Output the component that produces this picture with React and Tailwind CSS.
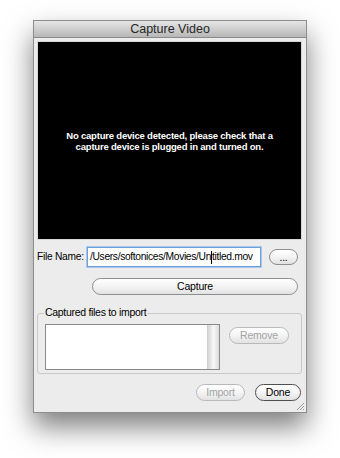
import React from 'react';

function AquaButton({ children, className = '', disabled = false, primary = false }) {
    const border = disabled ? 'border-[#b9b9b9] text-[#a3a3a3]' : primary ? 'border-[#4f4f4f] text-black' : 'border-[#8e8e8e] text-black';
    return (
        <div className={`flex items-center justify-center rounded-full border bg-gradient-to-b from-white via-[#f4f4f4] to-[#e2e2e2] text-[10.5px] tracking-[-0.2px] leading-none ${border} ${className}`}>
            {children}
        </div>
    );
}

export default function App() {
    return (
        <div className="w-[340px] h-[458px] bg-white pt-[20px] pl-[33px] font-['Liberation_Sans',Arial,sans-serif]">
            <div className="w-[274px] h-[393px] border border-[#8d8d8d] bg-[#ececec] shadow-[0_14px_26px_rgba(0,0,0,0.5)] flex flex-col relative">
                {/* Title bar */}
                <div className="h-[17px] shrink-0 bg-gradient-to-b from-[#e6e6e6] to-[#b7b7b7] border-b border-[#8a8a8a] flex items-center justify-center">
                    <span className="text-[12.5px] text-[#262626] leading-none">Capture Video</span>
                </div>

                <div className="pl-[3px] pt-[3px] flex flex-col">
                    {/* Preview */}
                    <div className="w-[265px] h-[199px] bg-black border border-[#d6d6d6] flex items-center justify-center">
                        <p className="text-white font-bold text-[9.5px] leading-[11px] text-center tracking-[-0.2px]">
                            No capture device detected, please check that a<br />
                            capture device is plugged in and turned on.
                        </p>
                    </div>

                    {/* File row */}
                    <div className="mt-[7px] flex items-center h-[20px]">
                        <span className="w-[50px] shrink-0 whitespace-nowrap text-[10.2px] tracking-[-0.25px] text-black">File Name:</span>
                        <div className="w-[174px] h-[20px] shrink-0 bg-white border border-[#6f9fd8] shadow-[0_0_0_1px_#a9c8ee] flex items-center pl-[2px] text-[10.3px] tracking-[-0.35px] text-black whitespace-nowrap overflow-hidden">
                            /Users/softonices/Movies/Un<span className="inline-block w-px h-[13px] bg-black"></span>titled.mov
                        </div>
                        <AquaButton className="ml-[8px] w-[29px] h-[16px] shrink-0 text-[9px]">...</AquaButton>
                    </div>

                    {/* Capture */}
                    <AquaButton className="mt-[11px] ml-[55px] w-[206px] h-[17px]">Capture</AquaButton>

                    {/* Group box */}
                    <div className="mt-[18px] w-[265px] h-[61px] border border-[#c9c9c9] rounded-[3px] relative flex">
                        <span className="absolute -top-[7px] left-[6px] bg-[#ececec] px-[1px] text-[10.5px] tracking-[-0.3px] text-black leading-none whitespace-nowrap">Captured files to import</span>
                        <div className="mt-[10px] ml-[7px] w-[175px] h-[46px] bg-white border border-[#8a8a8a] flex justify-end">
                            <div className="w-[12px] h-full bg-gradient-to-r from-[#d5d5d5] via-[#f7f7f7] to-[#dcdcdc] border-l border-[#cfcfcf]"></div>
                        </div>
                        <AquaButton disabled className="mt-[13px] ml-[9px] w-[60px] h-[17px]">Remove</AquaButton>
                    </div>

                    {/* Bottom buttons */}
                    <div className="mt-[10px] flex justify-end gap-[10px] pr-[5px]">
                        <AquaButton disabled className="w-[49px] h-[17px]">Import</AquaButton>
                        <AquaButton primary className="w-[46px] h-[17px]">Done</AquaButton>
                    </div>
                </div>

                {/* Resize grip */}
                <svg className="absolute right-[1px] bottom-[1px]" width="10" height="10" viewBox="0 0 10 10">
                    <path d="M9 2 L2 9 M9 5 L5 9 M9 8 L8 9" stroke="#9a9a9a" strokeWidth="1" />
                </svg>
            </div>
        </div>
    );
}
